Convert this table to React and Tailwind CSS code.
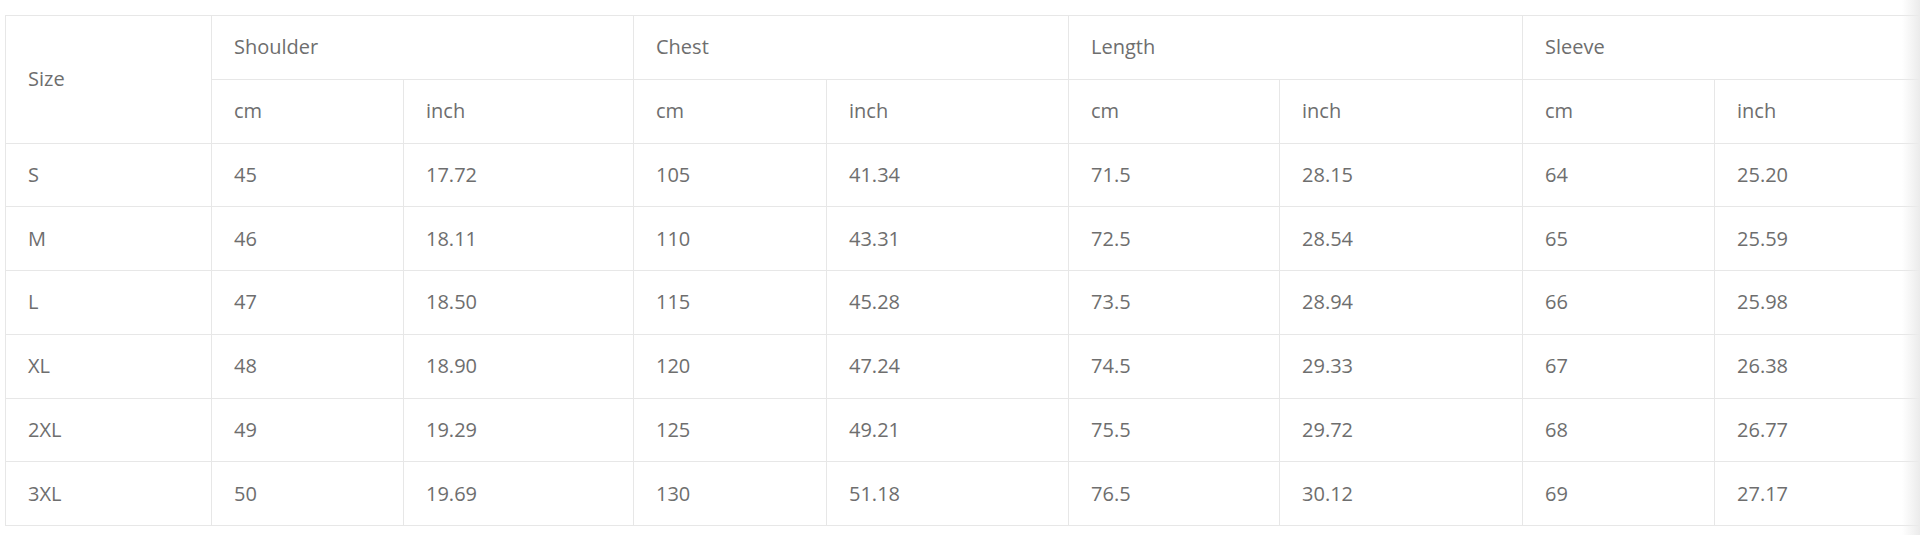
import React from 'react';

const groups = ['Shoulder', 'Chest', 'Length', 'Sleeve'];

const rows = [
  ['S', '45', '17.72', '105', '41.34', '71.5', '28.15', '64', '25.20'],
  ['M', '46', '18.11', '110', '43.31', '72.5', '28.54', '65', '25.59'],
  ['L', '47', '18.50', '115', '45.28', '73.5', '28.94', '66', '25.98'],
  ['XL', '48', '18.90', '120', '47.24', '74.5', '29.33', '67', '26.38'],
  ['2XL', '49', '19.29', '125', '49.21', '75.5', '29.72', '68', '26.77'],
  ['3XL', '50', '19.69', '130', '51.18', '76.5', '30.12', '69', '27.17'],
];

const colWidths = ['w-[206px]', 'w-[192px]', 'w-[230px]', 'w-[193px]', 'w-[242px]', 'w-[211px]', 'w-[243px]', 'w-[192px]', 'w-[250px]'];

const cellClass =
  'h-[63.75px] border border-[#e7e7e7] pl-[22px] pr-2 text-left align-middle font-normal';

export default function App() {
  return (
    <div className="relative h-[535px] w-full overflow-hidden bg-white pl-[5px] pt-[15px]">
      <table
        className="w-[1959px] table-fixed border-collapse text-[20px] text-[#6e6e6e]"
        style={{ fontFamily: '"Open Sans", "Liberation Sans", sans-serif' }}
      >
        <colgroup>
          {colWidths.map((w, i) => (
            <col key={i} className={w} />
          ))}
        </colgroup>
        <thead>
          <tr>
            <th rowSpan={2} className={cellClass}>Size</th>
            {groups.map((g) => (
              <th key={g} colSpan={2} className={cellClass}>{g}</th>
            ))}
          </tr>
          <tr>
            {groups.map((g) => (
              <React.Fragment key={g}>
                <th className={cellClass}>cm</th>
                <th className={cellClass}>inch</th>
              </React.Fragment>
            ))}
          </tr>
        </thead>
        <tbody>
          {rows.map((row) => (
            <tr key={row[0]}>
              {row.map((v, i) => (
                <td key={i} className={cellClass}>{v}</td>
              ))}
            </tr>
          ))}
        </tbody>
      </table>
      {/* scroll shadow on the right edge */}
      <div className="pointer-events-none absolute right-0 top-0 bottom-0 w-[18px] bg-gradient-to-r from-transparent to-[#ebebeb]" />
    </div>
  );
}
